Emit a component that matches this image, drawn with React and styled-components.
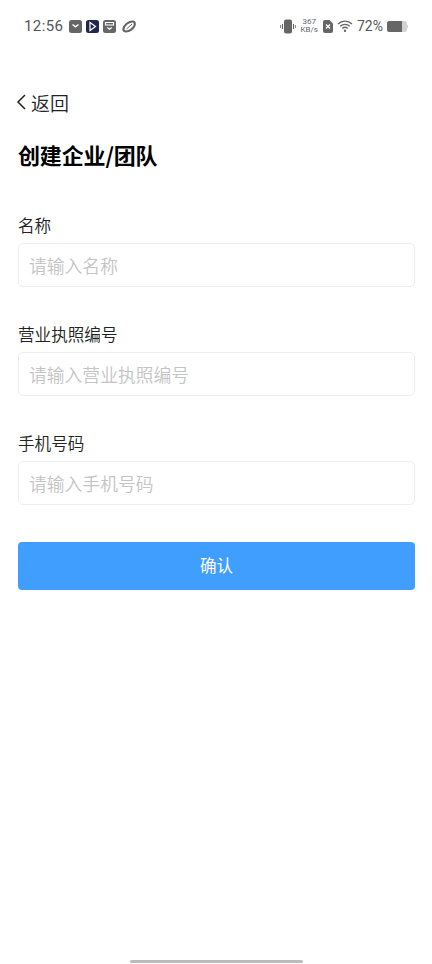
import styled, { createGlobalStyle } from "styled-components";

const GlobalStyle = createGlobalStyle`
  html, body {
    margin: 0;
    padding: 0;
    background: #fff;
  }
  body {
    font-family: "Noto Sans CJK SC", "Noto Sans", sans-serif;
  }
  * {
    box-sizing: border-box;
  }
`;

const Page = styled.div`
  width: 432px;
  height: 964px;
  display: flex;
  flex-direction: column;
  background: #fff;
  overflow: hidden;
`;

const StatusBar = styled.div`
  height: 52px;
  padding: 0 24px;
  display: flex;
  align-items: center;
  justify-content: space-between;
  color: #666;
`;

const StatusGroup = styled.div`
  display: flex;
  align-items: center;
  gap: ${(props) => props.$gap || 4}px;
`;

const Time = styled.span`
  font-family: Roboto, sans-serif;
  font-size: 15px;
  font-weight: 400;
  letter-spacing: 0.4px;
  color: #555;
  margin-right: 2px;
`;

const Speed = styled.span`
  font-family: Roboto, sans-serif;
  font-size: 8px;
  line-height: 8.5px;
  text-align: center;
  font-weight: 400;
  margin: 0 1px;
`;

const Battery = styled.span`
  font-family: Roboto, sans-serif;
  font-size: 14px;
  font-weight: 400;
  color: #555;
`;

const Main = styled.div`
  flex: 1;
  padding: 0 17px 0 18px;
  display: flex;
  flex-direction: column;
`;

const BackRow = styled.div`
  margin-top: 37px;
  margin-left: -3px;
  height: 26px;
  display: flex;
  align-items: center;
  gap: 3px;
  font-size: 19px;
  font-weight: 350;
  color: #222;
`;

const Title = styled.h1`
  margin: 23px 0 43px;
  font-size: 22px;
  line-height: 32px;
  font-weight: 700;
  letter-spacing: -0.15px;
  color: #000;
`;

const Field = styled.div`
  margin-bottom: 35px;
`;

const Label = styled.div`
  font-size: 16.6px;
  line-height: 24px;
  font-weight: 350;
  color: #222;
  margin-bottom: 6px;
`;

const Input = styled.input`
  display: block;
  width: 100%;
  height: 44px;
  padding: 0 10px;
  border: 1px solid #eeeeee;
  border-radius: 5px;
  outline: none;
  background: #fff;
  font-family: inherit;
  font-size: 17.800px;
  font-weight: 350;

  &::placeholder {
    color: #c4c4c4;
    opacity: 1;
  }
`;

const Button = styled.button`
  margin-top: 2px;
  width: 100%;
  height: 48px;
  padding: 0 0 3px;
  border: none;
  border-radius: 4px;
  background: #409eff;
  color: #fff;
  font-family: inherit;
  font-size: 16.500px;
`;

const HomeBar = styled.div`
  width: 173px;
  height: 3px;
  margin: 0 auto 1.500px;
  border-radius: 2px;
  background: #bbbbbb;
`;

const BadgeIcon = ({ bg = "#666", children }) => (
  <svg width="13" height="13" viewBox="0 0 13 13">
    <rect width="13" height="13" rx="2.500" fill={bg} />
    {children}
  </svg>
);

const App = () => (
  <Page>
    <GlobalStyle />
    <StatusBar>
      <StatusGroup>
        <Time>12:56</Time>
        <BadgeIcon>
          <path d="M3.500 4.500 6.500 6.800l3-2.300" fill="none" stroke="#fff" strokeWidth="1.400" />
        </BadgeIcon>
        <BadgeIcon bg="#23264f">
          <path d="M4 2.500v8l5.500-4z" fill="none" stroke="#fff" strokeWidth="1.200" />
        </BadgeIcon>
        <BadgeIcon>
          <path d="M2.500 2.500h8v2.500h-8zM4.300 7.500l2.200 1.800 2.200-1.800" fill="none" stroke="#fff" strokeWidth="1.100" />
        </BadgeIcon>
        <svg width="14" height="13" viewBox="0 0 14 13" style={{ marginLeft: 2 }}>
          <path d="M1.500 9C2 5 6.500 1.500 11 1.500c1.800 0 2 2.300 1.500 4C11.500 8.500 7.500 11.500 4 11.500 2 11.500 1.300 10.500 1.500 9z" fill="none" stroke="#666" strokeWidth="2.200" />
          <path d="M4.500 9 10 4" stroke="#666" strokeWidth="1" />
        </svg>
      </StatusGroup>
      <StatusGroup>
        <svg width="16" height="15" viewBox="0 0 16 15">
          <rect x="4" y="0.500" width="8" height="14" rx="2" fill="#666" />
          <path d="M2.500 5v5M.7 6.200v2.600M13.500 5v5M15.300 6.200v2.600" stroke="#666" />
        </svg>
        <Speed>
          367
          <br />
          KB/s
        </Speed>
        <svg width="10" height="13" viewBox="0 0 10 13">
          <path d="M2 0h4.500L10 3.500V11a2 2 0 0 1-2 2H2a2 2 0 0 1-2-2V2a2 2 0 0 1 2-2z" fill="#666" />
          <path d="M3 4.500l4 4M7 4.500l-4 4" stroke="#fff" strokeWidth="1.300" />
        </svg>
        <svg width="16" height="12" viewBox="0 0 16 12">
          <path d="M1 4a10 10 0 0 1 14 0M3.200 6.300a7 7 0 0 1 9.600 0M5.300 8.500a4 4 0 0 1 5.400 0" fill="none" stroke="#666" strokeWidth="1.400" />
          <circle cx="8" cy="10.700" r="1.200" fill="#666" />
        </svg>
        <Battery>72%</Battery>
        <svg width="21" height="11" viewBox="0 0 21 11">
          <rect width="20" height="11" rx="2.500" fill="#d2d2d2" />
          <path d="M2.500 0H15v11H2.500A2.500 2.500 0 0 1 0 8.500v-6A2.500 2.500 0 0 1 2.500 0z" fill="#666" />
          <path d="M20 3.500a1 2 0 0 1 0 4z" fill="#d2d2d2" />
        </svg>
      </StatusGroup>
    </StatusBar>
    <Main>
      <BackRow>
        <svg width="13" height="18" viewBox="0 0 13 18">
          <path d="M10 2 3 9l7 7" fill="none" stroke="#222" strokeWidth="1.500" />
        </svg>
        返回
      </BackRow>
      <Title>创建企业/团队</Title>
      <Field>
        <Label>名称</Label>
        <Input placeholder="请输入名称" />
      </Field>
      <Field>
        <Label>营业执照编号</Label>
        <Input placeholder="请输入营业执照编号" />
      </Field>
      <Field>
        <Label>手机号码</Label>
        <Input placeholder="请输入手机号码" />
      </Field>
      <Button>确认</Button>
    </Main>
    <HomeBar />
  </Page>
);

export default App;
